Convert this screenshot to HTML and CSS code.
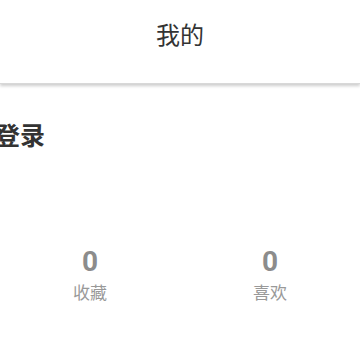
FILE: index.html
```html
<!DOCTYPE html>
<html>

<head>
    <title>我的</title>
    <link rel="stylesheet" href="styles.css">
</head>

<body>
    <div class="header">
        <h1>我的</h1>
    </div>

    <div class="user">
        <h2 class="login">未登录</h2>
    </div>

    <div class="stats">
        <div class="stat">
            <div class="stat-num">0</div>
            <div class="stat-label">收藏</div>
        </div>
        <div class="stat">
            <div class="stat-num">0</div>
            <div class="stat-label">喜欢</div>
        </div>
    </div>
</body>

</html>
```

FILE: styles.css
```css
body {
    font-family: "Noto Sans CJK SC", "Noto Sans", sans-serif;
    margin: 0;
    background-color: #fff;
    overflow: hidden;
}

.header {
    height: 84px;
    padding-top: 18px;
    display: flex;
    justify-content: center;
    align-items: flex-start;
    background-color: #fff;
    box-shadow: 0 2px 3px rgba(0, 0, 0, 0.2);
    border-bottom: 1px solid #d8d8d8;
    box-sizing: border-box;
}

h1 {
    margin: 0;
    font-size: 24px;
    font-weight: normal;
    color: #333;
    line-height: 32px;
}

.user {
    padding-top: 34px;
    height: 116px;
    box-sizing: border-box;
}

.login {
    margin: 0 0 0 -30px;
    font-size: 25px;
    font-weight: bold;
    color: #333;
    line-height: 32px;
}

.stats {
    display: grid;
    grid-template-columns: 1fr 1fr;
    padding-top: 46px;
}

.stat {
    text-align: center;
}

.stat-num {
    font-family: Roboto, "Noto Sans", sans-serif;
    font-size: 28px;
    font-weight: bold;
    color: #8c8c8c;
    line-height: 32px;
}

.stat-label {
    font-size: 17px;
    color: #999;
    line-height: 24px;
    margin-top: 2px;
}
```
